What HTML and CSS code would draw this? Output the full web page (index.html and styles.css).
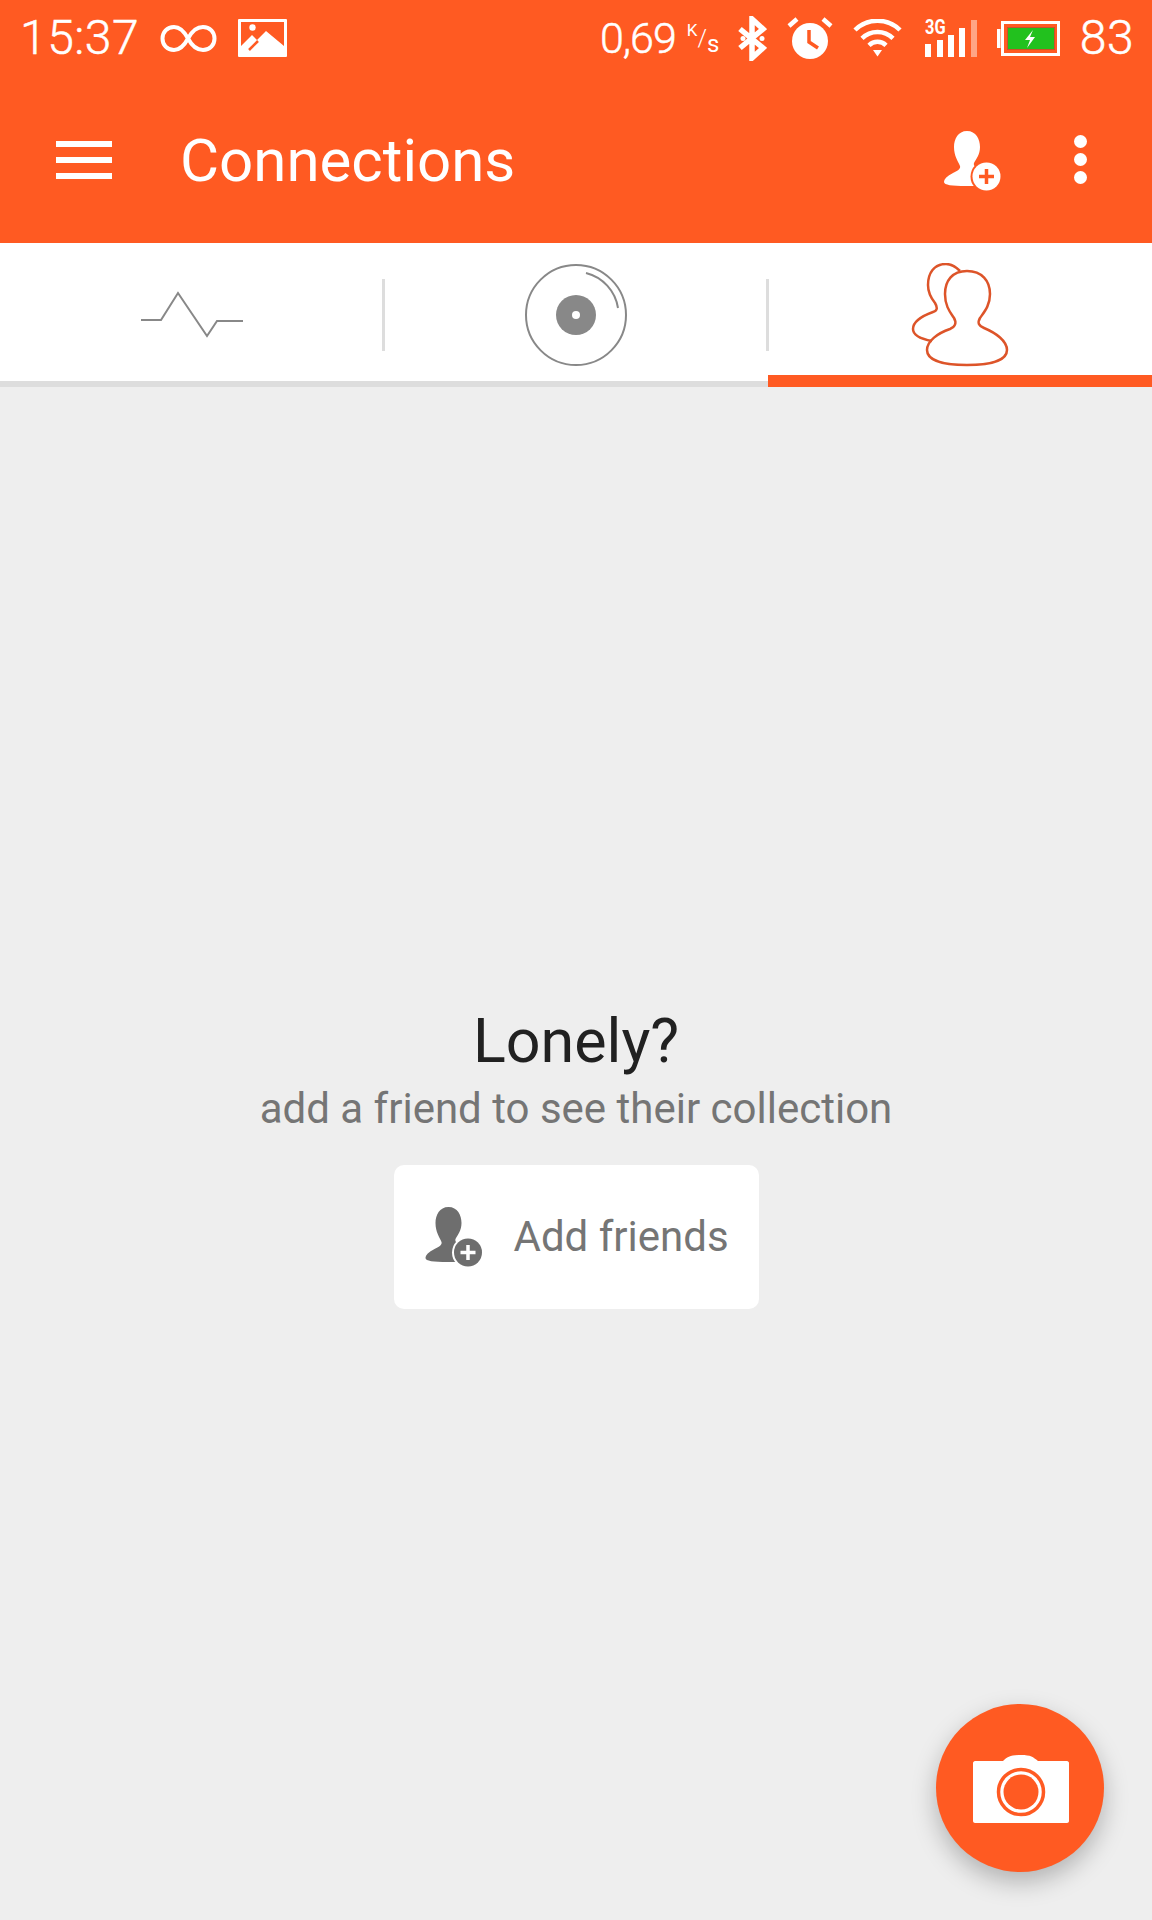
FILE: index.html
```html
<!DOCTYPE html>
<html lang="en">
<head>
    <meta charset="UTF-8">
    <meta name="viewport" content="width=device-width, initial-scale=1.0">
    <title>Connections</title>
    <link rel="stylesheet" href="styles.css">
</head>
<body>

<div class="screen">
    <header class="header">
        <div class="status-bar">
            <div class="status-left">
                <span class="status-text">15:37</span>
                <svg class="icon-infinity" viewBox="0 0 57 29" fill="none" stroke="#fff" stroke-width="4">
                    <path d="M28 14.5C24 7 20 3 14 3C7 3 2.5 8 2.5 14.5C2.5 21 7 26 14 26C20 26 24 22 28 14.5C32 7 36 3 43 3C50 3 54.5 8 54.5 14.5C54.5 21 50 26 43 26C36 26 32 22 28 14.5Z"/>
                </svg>
                <svg class="icon-image" viewBox="0 0 49 38">
                    <rect width="49" height="38" rx="1" fill="#fff"/>
                    <path d="M3 3H46V27L28 12L19 21L14 16L3 27Z" fill="#ff5a22"/>
                    <circle cx="14.5" cy="8.5" r="3.2" fill="#fff"/>
                    <path d="M11 31L20 22" stroke="#ff5a22" stroke-width="2.5"/>
                </svg>
            </div>
            <div class="status-right">
                <span class="status-speed">0,69</span>
                <span class="speed-unit"><span class="unit-k">K</span><span class="unit-slash">/</span><span class="unit-s">s</span></span>
                <svg class="icon-bluetooth" viewBox="0 0 30 45">
                    <path d="M3 13L26 32L15 42V3L26 13L3 32" fill="none" stroke="#fff" stroke-width="5.5"/>
                    <circle cx="6" cy="22.5" r="2.5" fill="#fff"/>
                    <circle cx="25" cy="22.5" r="2.5" fill="#fff"/>
                </svg>
                <svg class="icon-alarm" viewBox="0 0 46 42">
                    <circle cx="23" cy="24" r="18" fill="#fff"/>
                    <path d="M2 9L10 2M44 9L36 2" stroke="#fff" stroke-width="4.5" fill="none"/>
                    <path d="M22 13V25L31 31" stroke="#ff5a22" stroke-width="3.5" fill="none"/>
                </svg>
                <svg class="icon-wifi" viewBox="0 0 49 38" fill="none" stroke="#fff" stroke-width="4.5">
                    <path d="M2 11A32 32 0 0 1 47 11"/>
                    <path d="M9 19.3A22 22 0 0 1 40 19.3"/>
                    <path d="M16 26.3A12 12 0 0 1 33 26.3"/>
                    <path d="M20 31H29L24.5 37.5Z" fill="#fff" stroke="none"/>
                </svg>
                <div class="signal">
                    <span class="signal-label">3G</span>
                    <svg class="icon-signal" viewBox="0 0 52 37">
                        <rect x="0" y="24" width="6" height="13" fill="#fff"/>
                        <rect x="12" y="20" width="6" height="17" fill="#fff"/>
                        <rect x="23" y="15" width="6" height="22" fill="#fff"/>
                        <rect x="34" y="8" width="6" height="29" fill="#fff"/>
                        <rect x="46" y="0" width="6" height="37" fill="#fff" fill-opacity="0.45"/>
                    </svg>
                </div>
                <svg class="icon-battery" viewBox="0 0 63 35">
                    <rect x="0" y="8" width="3.5" height="19" fill="#fff"/>
                    <rect x="5.5" y="1.5" width="56" height="32" fill="#ff5a22" stroke="#fff" stroke-width="3"/>
                    <rect x="10.5" y="6.5" width="47" height="22" fill="#22c11e" stroke="#c8522a" stroke-width="1"/>
                    <path d="M36 9L28 19H33L30 27L38 16H33Z" fill="#fff"/>
                </svg>
                <span class="status-text">83</span>
            </div>
        </div>
        <div class="app-bar">
            <div class="menu-icon">
                <span></span>
                <span></span>
                <span></span>
            </div>
            <h1 class="title">Connections</h1>
            <svg class="icon-add-friend" viewBox="0 0 57 60">
                <path fill="#fff" d="M23 0C14 0 10 8 10 16C10 25 14 30 16 35C17 38 13 40 9 42C3 45 0 48 0 51C0 54 8 55 22 55L34 55L38 38C32 37 29 35 30 32C32 28 36 24 36 16C36 8 32 0 23 0Z"/>
                <circle cx="42.5" cy="45.5" r="16" fill="#ff5a22"/>
                <circle cx="42.5" cy="45.5" r="14" fill="#fff"/>
                <path d="M35 45.5H50M42.5 38V53" stroke="#ff5a22" stroke-width="3.5"/>
            </svg>
            <div class="more-icon">
                <span></span>
                <span></span>
                <span></span>
            </div>
        </div>
    </header>

    <nav class="tabs">
        <div class="tab">
            <svg class="tab-icon" viewBox="0 0 104 104" width="104" height="104">
                <path d="M1 57H21L38 30L67 73L77 58H103" fill="none" stroke="#888" stroke-width="2"/>
            </svg>
        </div>
        <div class="tab">
            <svg class="tab-icon" viewBox="0 0 104 104" width="104" height="104">
                <circle cx="52" cy="52" r="50" fill="none" stroke="#888" stroke-width="2"/>
                <circle cx="52" cy="52" r="20" fill="#888"/>
                <circle cx="52" cy="52" r="4" fill="#fff"/>
                <path d="M62 10A43 43 0 0 1 94 45" fill="none" stroke="#888" stroke-width="2"/>
            </svg>
        </div>
        <div class="tab tab-active">
            <svg class="tab-icon" viewBox="911 263 98 104" width="98" height="104" fill="none" stroke="#dd5429" stroke-width="2.5">
                <path d="M960 271C955 266 950 264 946 264C934 264 928 273 928 285C928 293 931 298 935 303C938 308 937 311 933 312C922 316 913 322 913 329C913 336 921 339 932 341"/>
                <path d="M967 271C952 271 945 281 945 294C945 306 950 312 954 318C957 323 955 327 950 329C938 333 927 341 927 350C927 361 945 365 967 365C989 365 1007 361 1007 350C1007 341 996 333 984 328C979 326 977 323 980 318C985 311 990 305 990 294C990 281 982 271 967 271Z"/>
            </svg>
        </div>
    </nav>

    <main class="empty-state">
        <h2 class="empty-title">Lonely?</h2>
        <p class="empty-text">add a friend to see their collection</p>
        <div class="add-button">
            <svg class="icon-add-friend-small" viewBox="0 0 57 60">
                <path fill="#6e6e6e" d="M23 0C14 0 10 8 10 16C10 25 14 30 16 35C17 38 13 40 9 42C3 45 0 48 0 51C0 54 8 55 22 55L34 55L38 38C32 37 29 35 30 32C32 28 36 24 36 16C36 8 32 0 23 0Z"/>
                <circle cx="42.5" cy="45.5" r="16" fill="#fff"/>
                <circle cx="42.5" cy="45.5" r="14" fill="#6e6e6e"/>
                <path d="M35 45.5H50M42.5 38V53" stroke="#fff" stroke-width="3.5"/>
            </svg>
            <span class="add-label">Add friends</span>
        </div>
    </main>

    <div class="fab">
        <svg class="icon-camera" viewBox="0 0 96 68">
            <path fill="#fff" d="M2 6H30C34 2 38 0 48 0C58 0 60 2 65 6H94C95 6 96 7 96 8V66C96 67 95 68 94 68H2C1 68 0 67 0 66V8C0 7 1 6 2 6Z"/>
            <circle cx="48" cy="37" r="22.5" fill="none" stroke="#ff5a22" stroke-width="3.5"/>
            <circle cx="48" cy="37" r="17.5" fill="#ff5a22"/>
        </svg>
    </div>
</div>

</body>
</html>
```

FILE: styles.css
```css
* {
    box-sizing: border-box;
}
body {
    margin: 0;
    font-family: Roboto, "Liberation Sans", sans-serif;
    background-color: #eeeeee;
}
.screen {
    position: relative;
    display: flex;
    flex-direction: column;
    width: 1152px;
    height: 1920px;
    overflow: hidden;
}

.header {
    height: 243px;
    background-color: #ff5a22;
    color: white;
}
.status-bar {
    display: flex;
    justify-content: space-between;
    align-items: center;
    height: 76px;
    padding: 0 18px 0 20px;
}
.status-left,
.status-right {
    display: flex;
    align-items: center;
}
.status-left {
    gap: 21px;
}
.status-right {
    gap: 20px;
}
.status-text {
    font-size: 48px;
    font-weight: 300;
    line-height: 54px;
    letter-spacing: 0.5px;
    -webkit-text-stroke: 0.5px white;
}
.status-speed {
    font-size: 43px;
    font-weight: 300;
    line-height: 54px;
    letter-spacing: -1px;
    -webkit-text-stroke: 0.5px white;
}
.icon-infinity {
    width: 57px;
    height: 29px;
}
.icon-image {
    width: 49px;
    height: 38px;
}
.speed-unit {
    display: flex;
    align-items: flex-start;
    width: 30px;
    height: 32px;
    margin-left: -9px;
    line-height: 1;
}
.unit-k {
    font-size: 17px;
}
.unit-slash {
    font-size: 24px;
    font-weight: 300;
    margin-top: 4px;
}
.unit-s {
    font-size: 24px;
    margin-top: 10px;
}
.icon-bluetooth {
    width: 30px;
    height: 45px;
}
.icon-alarm {
    width: 46px;
    height: 42px;
}
.icon-wifi {
    width: 49px;
    height: 38px;
}
.signal {
    position: relative;
    display: flex;
    width: 52px;
    margin-left: 3px;
}
.icon-signal {
    width: 52px;
    height: 37px;
}
.signal-label {
    position: absolute;
    left: 0;
    top: -3px;
    font-size: 21px;
    font-weight: 700;
    line-height: 21px;
    transform: scaleX(0.78);
    transform-origin: left;
}
.icon-battery {
    width: 63px;
    height: 35px;
}

.app-bar {
    display: flex;
    align-items: center;
    height: 167px;
    padding-left: 56px;
}
.menu-icon {
    display: flex;
    flex-direction: column;
    gap: 10px;
    width: 56px;
}
.menu-icon span {
    height: 6px;
    background-color: white;
}
.title {
    margin: 2px 0 0 68px;
    font-size: 60px;
    font-weight: 400;
    line-height: 70px;
    flex: 1;
}
.icon-add-friend {
    width: 57px;
    height: 60px;
    margin-top: 2px;
}
.more-icon {
    display: flex;
    flex-direction: column;
    gap: 5px;
    margin: 0 65px 0 73px;
}
.more-icon span {
    width: 13px;
    height: 13px;
    border-radius: 50%;
    background-color: white;
}

.tabs {
    display: grid;
    grid-template-columns: repeat(3, 1fr);
    height: 144px;
}
.tab {
    position: relative;
    display: flex;
    justify-content: center;
    align-items: flex-start;
    padding-top: 20px;
    background-color: white;
    border-bottom: 6px solid #dddddd;
}
.tab + .tab::before {
    content: "";
    position: absolute;
    left: -2px;
    top: 36px;
    width: 3px;
    height: 72px;
    background-color: #dddddd;
}
.tab-active {
    border-bottom: 12px solid #ff5a22;
}

.empty-state {
    display: flex;
    flex-direction: column;
    align-items: center;
    justify-content: center;
    flex: 1;
    padding-top: 7px;
}
.empty-title {
    margin: 0 0 8px;
    font-size: 61px;
    font-weight: 400;
    line-height: 70px;
    color: #212121;
}
.empty-text {
    margin: 0;
    font-size: 42px;
    line-height: 50px;
    color: #757575;
}
.add-button {
    display: flex;
    align-items: center;
    gap: 31px;
    width: 365px;
    height: 144px;
    margin-top: 31px;
    padding-left: 31px;
    background-color: white;
    border-radius: 10px;
}
.icon-add-friend-small {
    width: 58px;
    height: 60px;
}
.add-label {
    font-size: 42px;
    color: #757575;
}

.fab {
    position: absolute;
    right: 48px;
    bottom: 48px;
    display: flex;
    justify-content: center;
    align-items: center;
    width: 168px;
    height: 168px;
    border-radius: 50%;
    background-color: #ff5a22;
    box-shadow: 0 10px 24px rgba(0, 0, 0, 0.25);
}
.icon-camera {
    width: 96px;
    height: 68px;
    margin: 2px 0 0 2px;
}
```
